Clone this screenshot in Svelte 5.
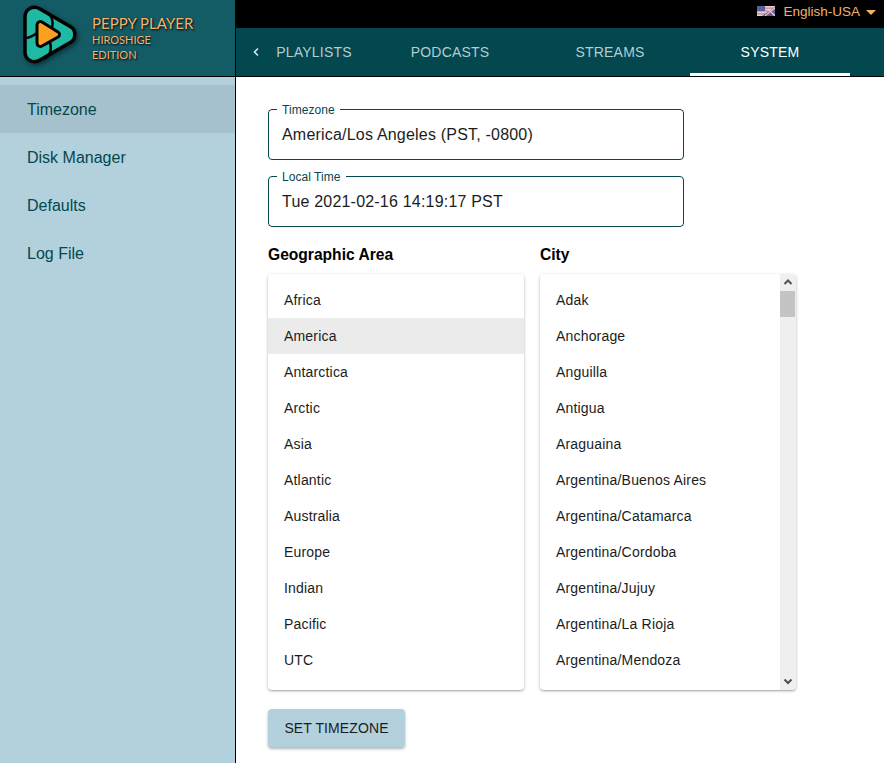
<script>
	const areas = ['Africa', 'America', 'Antarctica', 'Arctic', 'Asia', 'Atlantic', 'Australia', 'Europe', 'Indian', 'Pacific', 'UTC'];
	const cities = ['Adak', 'Anchorage', 'Anguilla', 'Antigua', 'Araguaina', 'Argentina/Buenos Aires', 'Argentina/Catamarca', 'Argentina/Cordoba', 'Argentina/Jujuy', 'Argentina/La Rioja', 'Argentina/Mendoza'];
	const menu = ['Timezone', 'Disk Manager', 'Defaults', 'Log File'];
	const tabs = ['PLAYLISTS', 'PODCASTS', 'STREAMS', 'SYSTEM'];
</script>

<div class="app">
	<header class="header">
		<div class="brand">
			<svg class="logo" width="56" height="60" viewBox="22 5 56 60">
				<path d="M25 17C25 9 33 5 40 9L71 27C76 30 76 39 71 42L40 60C33 64 25 60 25 52Z" fill="#1fb9a4" stroke="#000" stroke-width="3.5" stroke-linejoin="round" />
				<path d="M43 11C50 13 54 19 52 28M25 38C29 38 33 36 37 33M44 59C50 56 52 50 50 42" fill="none" stroke="#000" stroke-width="2.5" />
				<path d="M37 25C37 22 40 21 42 22L58 32C60 33 60 36 58 37L42 46C40 47 37 46 37 43Z" fill="#fba01f" stroke="#000" stroke-width="3" stroke-linejoin="round" />
			</svg>
			<div class="brand-text">
				<div class="brand-title">PEPPY PLAYER</div>
				<div class="brand-sub">HIROSHIGE</div>
				<div class="brand-sub">EDITION</div>
			</div>
		</div>
		<div class="header-right">
			<div class="topbar">
				<svg class="flag" width="18" height="10" viewBox="0 0 18 10">
					<rect width="18" height="10" fill="#e3cfd2" />
					<rect width="18" height="1.3" y="1.5" fill="#d8808c" />
					<rect width="18" height="1.3" y="4.3" fill="#d8808c" />
					<rect width="18" height="1.3" y="7.2" fill="#d8808c" />
					<rect width="8" height="5" fill="#5a5f98" />
					<path d="M5 10L18 10L18 1Z" fill="#56609f" />
					<path d="M8 10L18 2M11 3L18 10" stroke="#e8d5d8" stroke-width="1.4" />
					<path d="M9 10L18 3" stroke="#cf5566" stroke-width="0.8" />
				</svg>
				<span class="lang">English-USA</span>
				<span class="caret"></span>
			</div>
			<nav class="tabs">
				<div class="back">
					<svg width="6" height="10" viewBox="2 0 6 10">
						<path d="M7 1.5L3.5 5L7 8.5" fill="none" stroke="#d5e4e6" stroke-width="1.6" />
					</svg>
				</div>
				{#each tabs as tab, i}
					<div class="tab" class:active={i === 3} class:first={i === 0}>{tab}</div>
				{/each}
			</nav>
		</div>
	</header>

	<div class="body">
		<aside class="sidebar">
			{#each menu as item, i}
				<div class="menu-item" class:selected={i === 0}>{item}</div>
			{/each}
		</aside>

		<main class="content">
			<fieldset class="field">
				<legend>Timezone</legend>
				<div class="value">America/Los Angeles (PST, -0800)</div>
			</fieldset>
			<fieldset class="field">
				<legend>Local Time</legend>
				<div class="value">Tue 2021-02-16 14:19:17 PST</div>
			</fieldset>

			<div class="columns">
				<section class="col">
					<h2>Geographic Area</h2>
					<div class="list">
						{#each areas as area, i}
							<div class="row" class:current={i === 1}>{area}</div>
						{/each}
					</div>
				</section>
				<section class="col">
					<h2>City</h2>
					<div class="list with-scroll">
						<div class="rows">
							{#each cities as city}
								<div class="row">{city}</div>
							{/each}
						</div>
						<div class="scrollbar">
							<svg width="16" height="17" viewBox="0 0 16 17"><path d="M4.5 10L8 6.5L11.5 10" fill="none" stroke="#505050" stroke-width="2" /></svg>
							<div class="thumb"></div>
							<div class="track"></div>
							<svg width="16" height="17" viewBox="0 0 16 17"><path d="M4.5 6.5L8 10L11.5 6.5" fill="none" stroke="#505050" stroke-width="2" /></svg>
						</div>
					</div>
				</section>
			</div>

			<button class="action">SET TIMEZONE</button>
		</main>
	</div>
</div>

<style>
	:global(body) {
		margin: 0;
		background: #fff;
		font-family: "Liberation Sans", Arial, sans-serif;
	}

	.app {
		width: 884px;
		height: 763px;
		display: flex;
		flex-direction: column;
		overflow: hidden;
	}

	.header {
		display: flex;
		height: 76px;
		border-bottom: 1px solid #000;
		flex: none;
	}

	.brand {
		width: 236px;
		flex: none;
		box-sizing: border-box;
		background: #135b65;
		border-right: 1px solid #000;
		display: flex;
		align-items: flex-start;
		padding: 5px 0 0 22px;
	}

	.logo {
		flex: none;
		filter: drop-shadow(2px 2px 2px rgba(0, 0, 0, 0.45));
	}

	.brand-text {
		margin-left: 14px;
		padding-top: 9px;
		color: #f5b069;
		font-family: Lato, "Liberation Sans", sans-serif;
		text-shadow: 1px 1px 2px #000;
	}

	.brand-title {
		font-size: 15px;
		line-height: 18px;
		white-space: nowrap;
	}

	.brand-sub {
		font-size: 11px;
		line-height: 15px;
	}

	.header-right {
		flex: 1;
		display: flex;
		flex-direction: column;
	}

	.topbar {
		height: 28px;
		background: #000;
		display: flex;
		justify-content: flex-end;
		align-items: flex-start;
		padding: 4px 8px 0 0;
		box-sizing: border-box;
	}

	.flag {
		margin: 2px 8px 0 0;
	}

	.lang {
		color: #f5b069;
		font-size: 13.5px;
		line-height: 16px;
	}

	.caret {
		width: 0;
		height: 0;
		margin: 6px 0 0 6px;
		border-left: 5px solid transparent;
		border-right: 5px solid transparent;
		border-top: 5px solid #f5b069;
	}

	.tabs {
		height: 48px;
		background: #03474f;
		display: flex;
	}

	.back {
		width: 22px;
		flex: none;
		padding: 15px 0 0 17px;
		box-sizing: border-box;
	}

	.tab {
		width: 160px;
		box-sizing: border-box;
		height: 48px;
		text-align: center;
		color: #b3cdd2;
		font-size: 14px;
		line-height: 48px;
		letter-spacing: 0.2px;
	}

	.tab.first {
		width: 112px;
	}

	.tab.active {
		color: #fff;
		border-bottom: 3px solid #fff;
	}

	.body {
		flex: 1;
		display: flex;
		min-height: 0;
	}

	.sidebar {
		width: 236px;
		box-sizing: border-box;
		flex: none;
		background: #b3d1dd;
		border-right: 1px solid #000;
		padding-top: 8px;
	}

	.menu-item {
		height: 48px;
		line-height: 49px;
		padding-left: 27px;
		font-size: 16px;
		color: #03474f;
	}

	.menu-item.selected {
		background: #a5c1cd;
	}

	.content {
		flex: 1;
		padding: 24px 0 0 32px;
		color: #1c1c1c;
	}

	.field {
		width: 416px;
		height: 59px;
		box-sizing: border-box;
		margin: 0 0 8px;
		padding: 0 13px;
		border: 1px solid #03474f;
		border-radius: 4px;
	}

	legend {
		font-size: 12px;
		line-height: 14px;
		padding: 2px 5px 0;
		margin-left: -5px;
		color: #03474f;
		letter-spacing: 0.05px;
	}

	.value {
		font-size: 16px;
		line-height: 20px;
		letter-spacing: 0.2px;
		margin-top: 8px;
	}

	.columns {
		display: flex;
		gap: 16px;
		margin-top: 17px;
	}

	h2 {
		margin: 0 0 9px;
		padding-top: 1px;
		font-size: 15.6px;
		line-height: 20px;
		font-weight: 700;
		color: #000;
	}

	.col {
		width: 256px;
	}

	.list {
		height: 416px;
		box-sizing: border-box;
		padding-top: 8px;
		background: #fff;
		border-radius: 4px;
		box-shadow: 0 1px 3px rgba(0, 0, 0, 0.3), 0 1px 1px rgba(0, 0, 0, 0.1);
		overflow: hidden;
	}

	.with-scroll {
		display: flex;
		width: 256px;
		padding-top: 0;
	}

	.rows {
		flex: 1;
		padding-top: 8px;
	}

	.row {
		height: 36px;
		line-height: 36px;
		padding-left: 16px;
		font-size: 14px;
		letter-spacing: 0.18px;
		color: #1c1c1c;
	}

	.row.current {
		background: #ebebeb;
	}

	.scrollbar {
		width: 16px;
		flex: none;
		background: #efefef;
		display: flex;
		flex-direction: column;
	}

	.scrollbar svg {
		flex: none;
	}

	.thumb {
		height: 26px;
		margin-right: 1px;
		background: #c4c4c4;
	}

	.track {
		flex: 1;
	}

	.action {
		display: block;
		margin-top: 19px;
		width: 137px;
		height: 38px;
		border: 0;
		border-radius: 4px;
		padding: 0;
		background: #b3d1dd;
		color: #1c1c1c;
		font: inherit;
		font-size: 14px;
		letter-spacing: 0.1px;
		box-shadow: 0 2px 3px rgba(0, 0, 0, 0.3);
	}
</style>
